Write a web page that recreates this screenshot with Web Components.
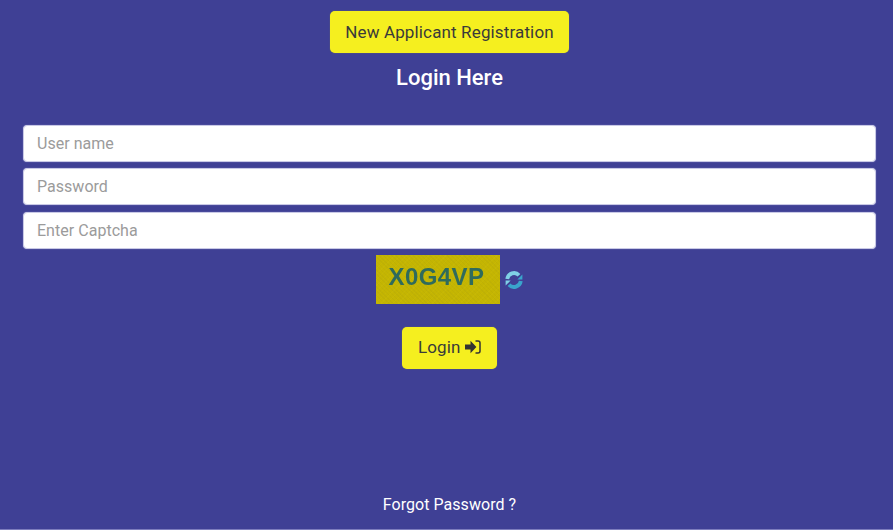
<!DOCTYPE html>
<html lang="en">
<head>
<meta charset="utf-8">
<title>Login</title>
<style>
    html, body {
        margin: 0;
        padding: 0;
        height: 100%;
        background-color: #3f4095;
        font-family: Roboto, "Liberation Sans", sans-serif;
    }
</style>
</head>
<body>
<login-page></login-page>

<script>
const buttonTemplate = document.createElement("template");
buttonTemplate.innerHTML = `
<style>
    :host {
        display: inline-flex;
        align-items: center;
        gap: 4px;
        height: 42px;
        padding: 0 15.5px;
        box-sizing: border-box;
        background-color: #f5ef1f;
        border-radius: 5px;
        box-shadow: 0 0 1px #9c9a3c;
        color: #3a3a3a;
        font-size: 17px;
        letter-spacing: 0.14px;
        cursor: pointer;
    }
</style>
<slot></slot>
`;

class YellowButton extends HTMLElement {
    constructor() {
        super();
        this.attachShadow({ mode: "open" });
        this.shadowRoot.appendChild(buttonTemplate.content.cloneNode(true));
    }
}

const fieldTemplate = document.createElement("template");
fieldTemplate.innerHTML = `
<style>
    :host {
        display: block;
    }
    input {
        display: block;
        width: 100%;
        height: 37px;
        box-sizing: border-box;
        padding: 0 13px;
        border: 1px solid #c9c9e6;
        border-radius: 4px;
        box-shadow: 0 0 1px #a9a9d6;
        background-color: #ffffff;
        font-family: inherit;
        font-size: 16px;
        letter-spacing: 0.03px;
        color: #333333;
        outline: none;
    }
    input::placeholder {
        color: #9b9b9b;
        opacity: 1;
    }
</style>
<input id="input">
`;

class TextField extends HTMLElement {
    constructor() {
        super();
        this.attachShadow({ mode: "open" });
        this.shadowRoot.appendChild(fieldTemplate.content.cloneNode(true));
        this.input = this.shadowRoot.getElementById("input");
    }

    connectedCallback() {
        this.input.placeholder = this.getAttribute("placeholder") || "";
        this.input.type = this.getAttribute("type") || "text";
    }
}

const captchaTemplate = document.createElement("template");
captchaTemplate.innerHTML = `
<style>
    :host {
        display: flex;
        justify-content: center;
        align-items: center;
        gap: 4px;
    }
    .code {
        width: 124px;
        height: 49px;
        padding: 0 0 5px 13px;
        box-sizing: border-box;
        display: flex;
        align-items: center;
        background-color: #c4b502;
        background-image:
            repeating-linear-gradient(45deg, rgba(120, 120, 40, 0.07) 0 1px, transparent 1px 3px),
            repeating-linear-gradient(-45deg, rgba(230, 215, 30, 0.08) 0 1px, transparent 1px 4px);
        font-family: "Liberation Sans", sans-serif;
        font-weight: 700;
        font-size: 24px;
        letter-spacing: 0.4px;
        color: #2f6b5c;
    }
    .code span {
        filter: blur(0.7px);
    }
    svg {
        display: block;
        margin-top: 1px;
    }
</style>
<div class="code"><span><slot></slot></span></div>
<svg width="20" height="20" viewBox="0 0 20 20" aria-hidden="true">
    <path fill="none" stroke="#7fd0e6" stroke-width="3.8" d="M3.2 9 A6.9 6.9 0 0 1 15 5.2"/>
    <path fill="none" stroke="#3aa4cc" stroke-width="3.8" d="M16.8 11 A6.9 6.9 0 0 1 5 14.8"/>
    <path fill="#3aa4cc" d="M18.4 4.4 V9.4 H13.4 Z"/>
    <path fill="#7fd0e6" d="M1.6 15.6 V10.6 H6.6 Z"/>
</svg>
`;

class CaptchaBox extends HTMLElement {
    constructor() {
        super();
        this.attachShadow({ mode: "open" });
        this.shadowRoot.appendChild(captchaTemplate.content.cloneNode(true));
    }
}

const pageTemplate = document.createElement("template");
pageTemplate.innerHTML = `
<style>
    :host {
        display: flex;
        flex-direction: column;
        align-items: center;
        height: 530px;
        box-sizing: border-box;
        padding: 11px 17px 0 23px;
        border-bottom: 1px solid #7d7dbd;
        color: #ffffff;
    }
    h2 {
        margin: 12px 0 0;
        font-size: 22px;
        font-weight: 500;
        line-height: 26px;
    }
    .fields {
        align-self: stretch;
        display: flex;
        flex-direction: column;
        gap: 6.4px;
        margin: 34px 0 6px;
    }
    .login {
        margin-top: 23px;
        padding-bottom: 2px;
        padding-right: 16px;
    }
    svg {
        display: block;
    }
    .forgot {
        margin-top: auto;
        margin-bottom: 14px;
        font-size: 16px;
        letter-spacing: 0.05px;
        line-height: 20px;
    }
</style>
<yellow-button>New Applicant Registration</yellow-button>
<h2>Login Here</h2>
<div class="fields">
    <text-field placeholder="User name"></text-field>
    <text-field placeholder="Password" type="password"></text-field>
    <text-field placeholder="Enter Captcha"></text-field>
</div>
<captcha-box>X0G4VP</captcha-box>
<yellow-button class="login">Login
    <svg width="16" height="14" viewBox="0 0 16 14" aria-hidden="true">
        <path fill="#333333" d="M0 4.4 H5.5 V0.8 L11.4 7 L5.5 13.2 V9.6 H0 Z"/>
        <path fill="none" stroke="#333333" stroke-width="1.5" d="M10.5 1 H13 Q15 1 15 3 V11 Q15 13 13 13 H10.5"/>
    </svg>
</yellow-button>
<div class="forgot">Forgot Password ?</div>
`;

class LoginPage extends HTMLElement {
    constructor() {
        super();
        this.attachShadow({ mode: "open" });
        this.shadowRoot.appendChild(pageTemplate.content.cloneNode(true));
    }
}

window.customElements.define("yellow-button", YellowButton);
window.customElements.define("text-field", TextField);
window.customElements.define("captcha-box", CaptchaBox);
window.customElements.define("login-page", LoginPage);
</script>
</body>
</html>
